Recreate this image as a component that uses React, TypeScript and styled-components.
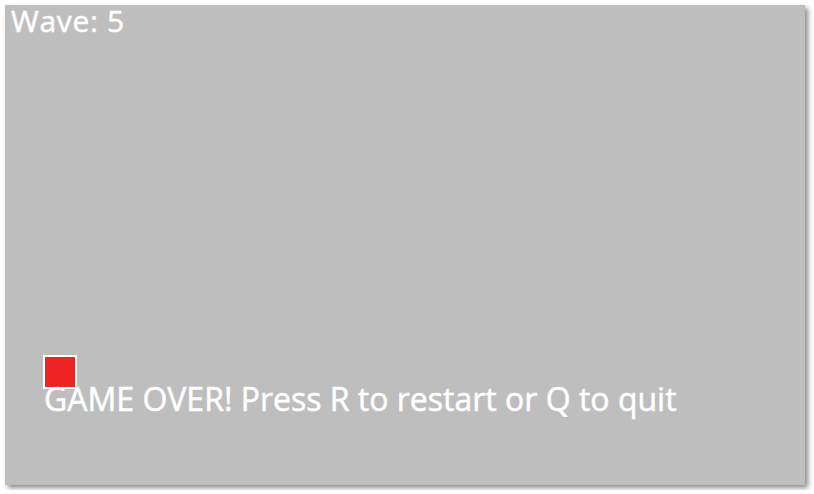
import React from "react";
import styled, { createGlobalStyle } from "styled-components";

const Global = createGlobalStyle`
  html, body { margin: 0; padding: 0; background: #ffffff; }
  body { font-family: "Open Sans", "Noto Sans", sans-serif; }
`;

const Page = styled.div`
  padding: 5px;
`;

const Canvas = styled.div`
  position: relative;
  width: 800px;
  height: 480px;
  background: #bebebe;
  box-shadow: 3px 3px 5px rgba(0, 0, 0, 0.45);
`;

const Hud = styled.div`
  padding: 0 0 0 6px;
  color: #ffffff;
  font-size: 30px;
  letter-spacing: 0.7px;
  line-height: 32px;
  -webkit-text-stroke: 0.5px #ffffff;
`;

const Player = styled.div<{ $x: number; $y: number }>`
  position: absolute;
  left: ${(p) => p.$x}px;
  top: ${(p) => p.$y}px;
  width: 30px;
  height: 30px;
  background: #ee2424;
  border: 2px solid #ffffff;
`;

const Message = styled.div<{ $x: number; $y: number }>`
  position: absolute;
  left: ${(p) => p.$x}px;
  top: ${(p) => p.$y}px;
  color: #ffffff;
  font-size: 32px;
  line-height: 34px;
  white-space: nowrap;
  -webkit-text-stroke: 0.5px #ffffff;
`;

export default function App() {
  return (
    <>
      <Global />
      <Page>
        <Canvas>
          <Hud>Wave: 5</Hud>
          <Player $x={38} $y={350} />
          <Message $x={39} $y={377}>
            GAME OVER! Press R to restart or Q to quit
          </Message>
        </Canvas>
      </Page>
    </>
  );
}
